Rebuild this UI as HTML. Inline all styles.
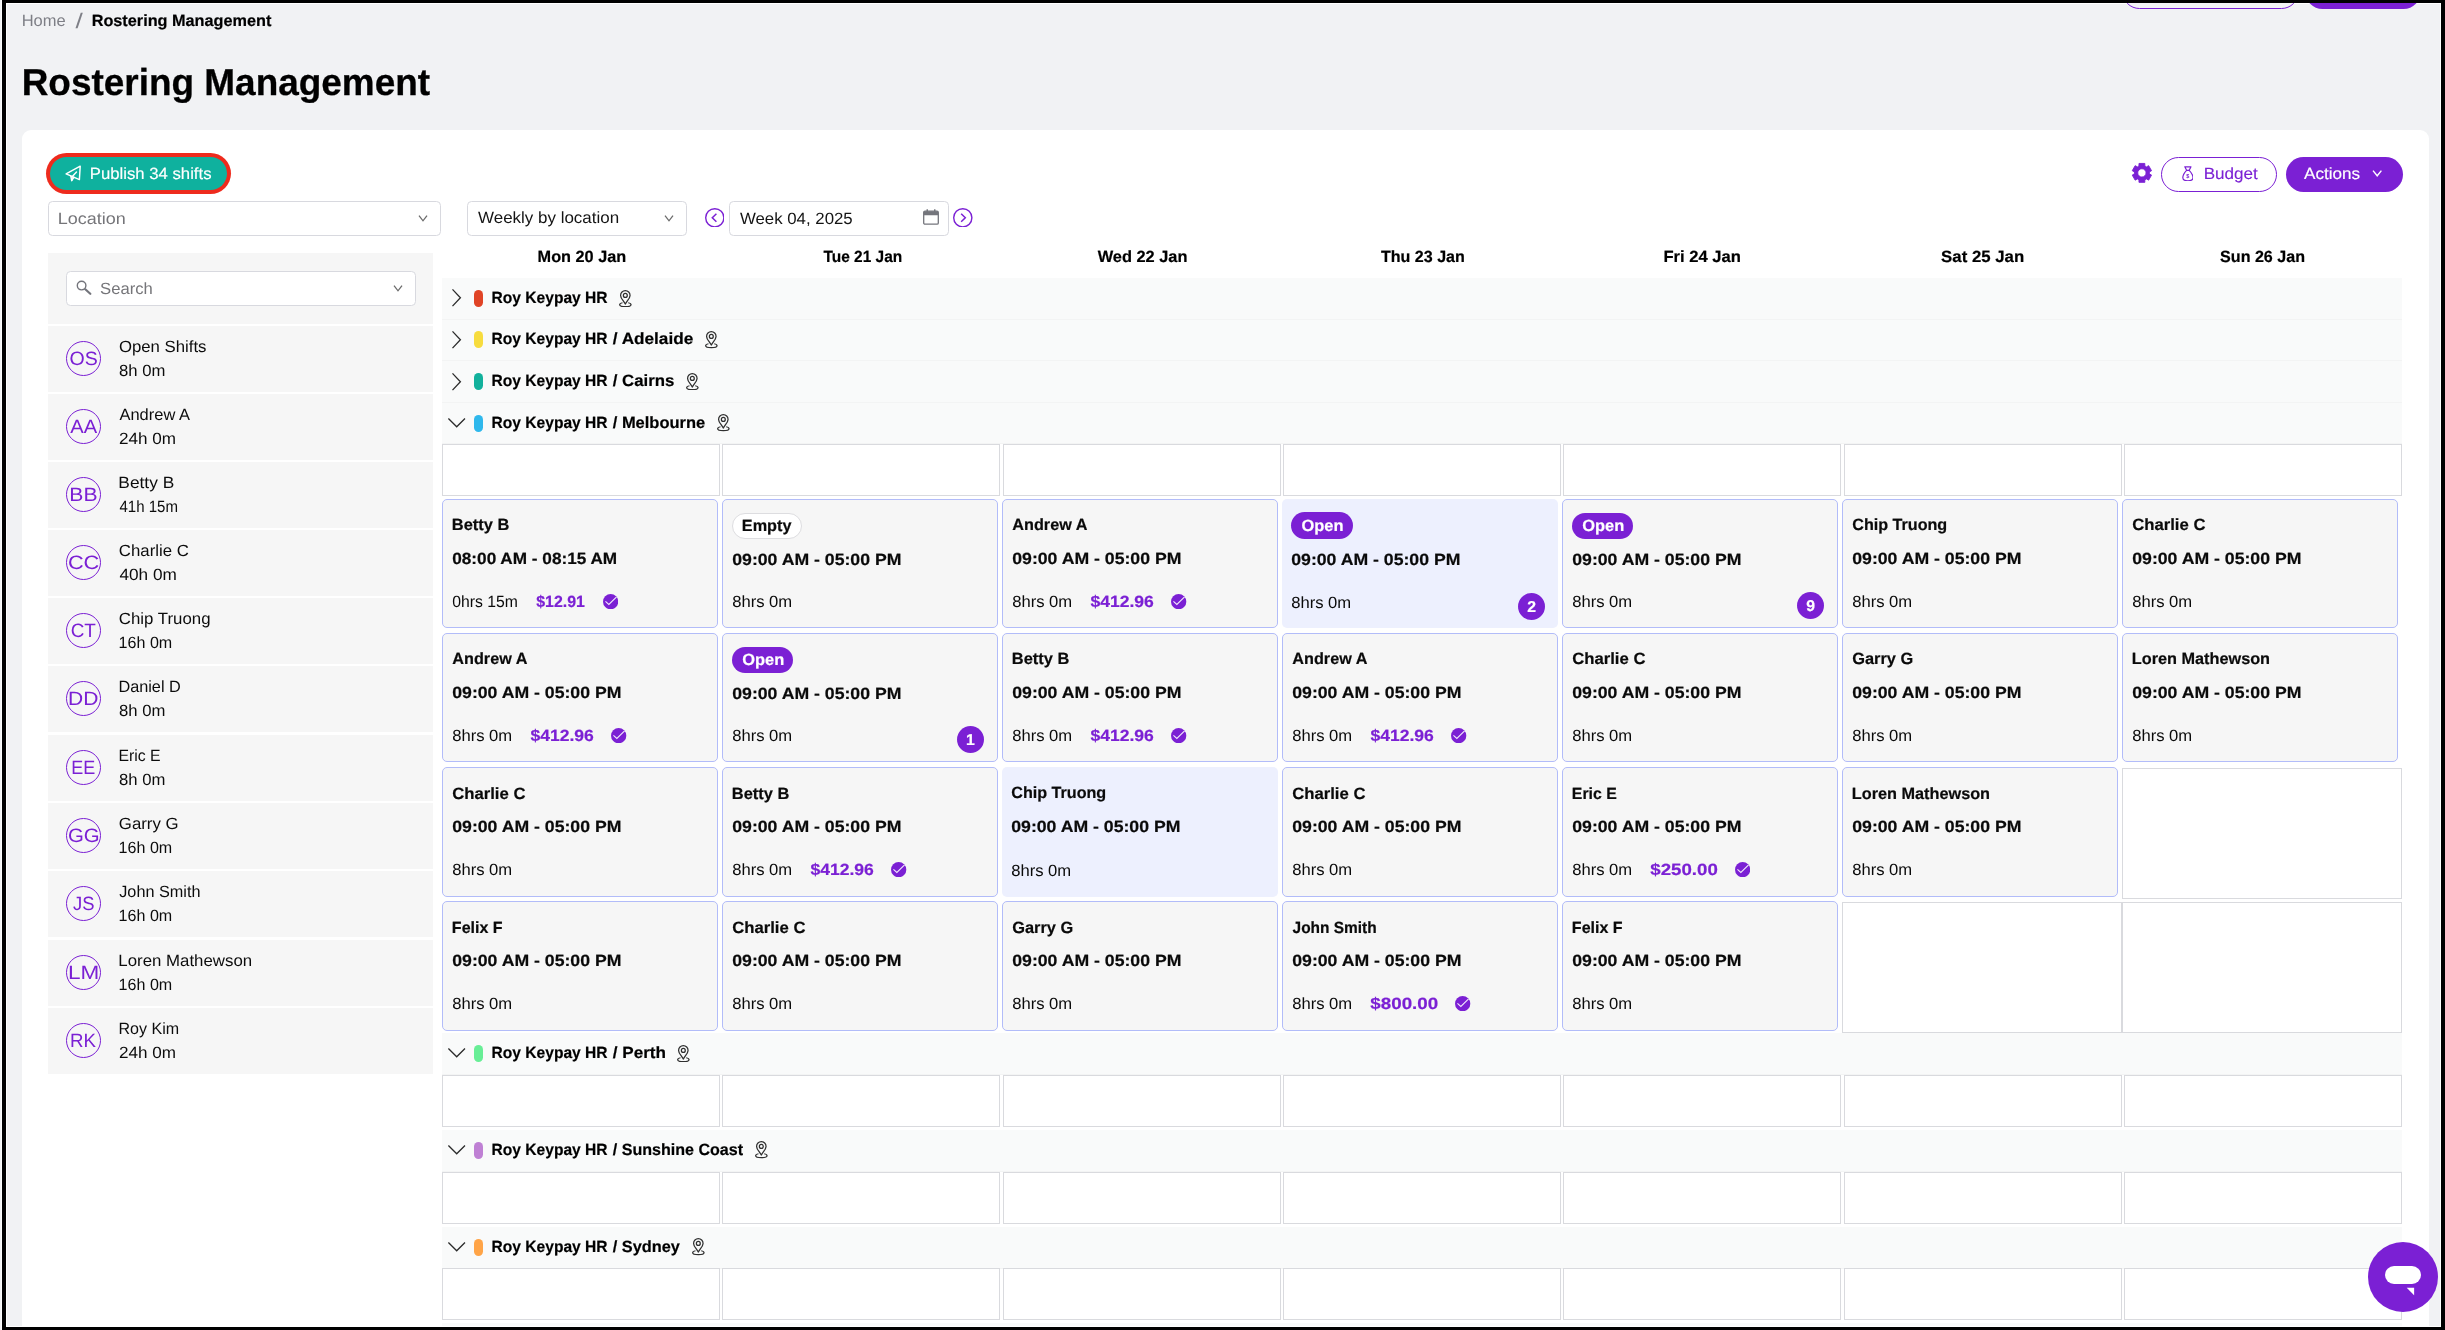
<!DOCTYPE html>
<html lang="en"><head><meta charset="utf-8"><title>Rostering Management</title>
<style>
html,body{margin:0;padding:0}
body{width:2445px;height:1330px;position:relative;background:#f1f2f4;font-family:"Liberation Sans", sans-serif;font-size:16px}
div,button,span,h1,h3,ul,li,nav,aside,section,main,article,header{margin:0;padding:0}
h3{font-size:inherit;font-weight:inherit}
ul{list-style:none}
#root{left:0;top:0;width:2445px;height:1330px;overflow:hidden;will-change:transform}
body div, body button, svg.i{position:absolute;display:block}
.t{position:absolute;white-space:pre;line-height:24px;margin:0;font-size:16.25px;font-weight:400;display:block;transform-origin:0 0;text-rendering:geometricPrecision}
.t.b,h1.t{font-weight:700;-webkit-text-stroke:0.2px currentColor}
h1.t{-webkit-text-stroke-width:0.3px}
button{font-family:inherit}
.sel{border:1.2px solid #d8d9df;border-radius:4.5px;box-sizing:border-box;background:#fff}
.cell{border:1.2px solid #d9dade;box-sizing:border-box;background:#fff}
.shift{background:#f6f6f6;border:1.2px solid #b2bcf9;border-radius:5px;box-sizing:border-box}
.shift.hl{background:#edf0fe;border:0}
.row{background:#f9fafa;border-bottom:1.5px solid #f3f4f4;box-sizing:border-box}
.pill{border-radius:4.5px}
.person{background:#f6f6f6}
.av{border:1.2px solid #7b20d4;border-radius:50%;box-sizing:border-box}
.badge{border-radius:13.5px;box-sizing:border-box}
.count{background:#7b20d4;border-radius:50%}
</style></head>
<body>
<div id="root">
<div class="frame">
<div style="left:1.00px;top:0.00px;width:1.00px;height:1330.00px;background:#fbfbfc"></div>
<div style="left:2.00px;top:0.00px;width:2443.00px;height:1330.00px;background:#000"></div>
<div style="left:6.00px;top:3.00px;width:2435.00px;height:1324.00px;background:#fff"></div>
<div style="left:7.00px;top:4.00px;width:2433.00px;height:1322.00px;background:#f1f2f4"></div>
</div>
<header class="top">
<button style="left:2121.50px;top:-26.50px;width:177.80px;height:35.30px;border:1.3px solid #7b20d4;border-radius:18px;box-sizing:border-box;background:#f3f3f6"></button>
<button style="left:2305.40px;top:-26.50px;width:116.00px;height:35.30px;border:0;border-radius:18px;background:#7b20d4"></button>
<div style="left:2.00px;top:0.00px;width:2443.00px;height:3.00px;background:#000"></div>
</header>
<nav class="crumbs">
<span class="t" style="left:21px;top:9px;color:#7e7f86;transform:matrix(1.0154,0,0,1,0.68,0);">Home</span>
<span class="t" style="left:75px;top:10px;font-size:21px;color:#7e7f86;transform:matrix(1.25,0,0,1,0.59,0);">/</span>
<span class="t b" style="left:91px;top:9px;transform:matrix(1.0003,0,0,1,0.64,0);">Rostering Management</span>
</nav>
<h1 class="t" style="left:21px;top:70px;font-size:37.5px;transform:matrix(0.9851,0,0,1,0.66,0);">Rostering Management</h1>
<main class="card">
<div style="left:22.00px;top:130.00px;width:2407.00px;height:1197.00px;background:#fff;border-radius:9px 9px 0 0"></div>
<div style="left:46.00px;top:153.00px;width:185.00px;height:41.00px;background:#ee2b1d;border-radius:21px"></div>
<button class="pub" style="left:50.00px;top:157.00px;width:177.00px;height:33.00px;background:#0fb19e;border-radius:17px;border:0"></button>
<svg class="i" style="left:65.20px;top:165.00px" width="16.80" height="16.60" viewBox="0 0 33.6 33.2" ><g fill="none" stroke="#fff" stroke-width="2.9" stroke-linejoin="round" stroke-linecap="round"><path d="M30.4 2.4 L2.2 17.8 L11.6 21.8 L28.8 29.2 Z"/><path d="M11.6 21.8 L13.4 31 L17.8 24.6"/><path d="M13.4 31 L14.6 23.2 L23 14.2"/></g></svg>
<span class="t" style="left:89px;top:162px;color:#fff;transform:matrix(1.0277,0,0,1,0.87,0);-webkit-text-stroke:0.15px #fff;">Publish 34 shifts</span>
<svg class="i" style="left:2131.00px;top:162.10px" width="21.80" height="21.80" viewBox="0 0 21.80 21.80" ><path d="M13.83 3.97 L13.83 1.44 L7.97 1.44 L7.97 3.97 L6.36 4.90 L4.17 3.64 L1.25 8.70 L3.43 9.97 L3.43 11.83 L1.25 13.10 L4.17 18.16 L6.36 16.90 L7.97 17.83 L7.97 20.36 L13.83 20.36 L13.83 17.83 L15.44 16.90 L17.63 18.16 L20.55 13.10 L18.37 11.83 L18.37 9.97 L20.55 8.70 L17.63 3.64 L15.44 4.90 Z M15.06 10.90 A4.16 4.16 0 1 0 6.74 10.90 A4.16 4.16 0 1 0 15.06 10.90 Z" fill="#7b20d4" fill-rule="evenodd" stroke="#7b20d4" stroke-width="0.9" stroke-linejoin="round"/></svg>
<button style="left:2160.60px;top:156.60px;width:116.30px;height:35.30px;border:1.2px solid #7b20d4;border-radius:18px;box-sizing:border-box;background:#fff"></button>
<svg class="i" style="left:2181.60px;top:165.60px" width="11.80" height="15.60" viewBox="0 0 23.6 31.2" ><g fill="none" stroke="#7b20d4" stroke-width="2.4" stroke-linejoin="round" stroke-linecap="round"><path d="M5.6 1.6 H18 L14.4 8.6 H9.2 Z"/><path d="M9.2 8.6 C5 13 1.6 18.6 1.6 23.4 C1.6 27.6 4.8 29.6 11.8 29.6 C18.8 29.6 22 27.6 22 23.4 C22 18.6 18.6 13 14.4 8.6"/></g><text x="11.8" y="25" font-family="Liberation Sans, sans-serif" font-weight="700" font-size="11" fill="#7b20d4" text-anchor="middle">$</text></svg>
<span class="t" style="left:2203px;top:162px;color:#7b20d4;transform:matrix(1.0532,0,0,1,0.63,0);-webkit-text-stroke:0.1px #7b20d4;">Budget</span>
<button style="left:2285.60px;top:156.60px;width:117.10px;height:35.30px;border:0;border-radius:18px;background:#7b20d4"></button>
<span class="t" style="left:2304px;top:162px;color:#fff;transform:matrix(1.052,0,0,1,0.08,0);-webkit-text-stroke:0.15px #fff;">Actions</span>
<svg class="i" style="left:2371.60px;top:169.30px" width="10.40" height="8.20" viewBox="-1 -1 10.4 8.2" ><path d="M0 0.6 L4.2 5.8 L8.4 0.6" fill="none" stroke="#fff" stroke-width="1.4"/></svg>
<div class="sel" style="left:48.00px;top:201.20px;width:393.00px;height:34.60px;"></div>
<span class="t" style="left:57px;top:207px;color:#757579;transform:matrix(1.106,0,0,1,0.86,0);">Location</span>
<svg class="i" style="left:418.20px;top:213.50px" width="10.00" height="8.20" viewBox="-1 -1 10 8.2" ><path d="M0 0.6 L4.0 5.8 L8 0.6" fill="none" stroke="#6b6b6b" stroke-width="1.3"/></svg>
<div class="sel" style="left:467.00px;top:201.20px;width:219.60px;height:34.60px;"></div>
<span class="t" style="left:478px;top:206px;color:#141414;transform:matrix(1.0439,0,0,1,0.02,0);">Weekly by location</span>
<svg class="i" style="left:664.00px;top:213.50px" width="10.00" height="8.20" viewBox="-1 -1 10 8.2" ><path d="M0 0.6 L4.0 5.8 L8 0.6" fill="none" stroke="#6b6b6b" stroke-width="1.3"/></svg>
<svg class="i" style="left:704.60px;top:207.50px" width="19.60" height="19.60" viewBox="0 0 19.6 19.6" ><circle cx="9.8" cy="9.8" r="9.10" fill="none" stroke="#7b20d4" stroke-width="1.4"/><path d="M11.42 5.82 L7.29 9.80 L11.42 13.78" fill="none" stroke="#7b20d4" stroke-width="1.5"/></svg>
<div class="sel" style="left:729.00px;top:201.20px;width:219.50px;height:34.60px;"></div>
<span class="t" style="left:739px;top:207px;color:#141414;transform:matrix(1.0344,0,0,1,0.93,0);">Week 04, 2025</span>
<svg class="i" style="left:922.80px;top:209.40px" width="16.00" height="16.00" viewBox="0 0 32 32" ><rect x="1.4" y="4.4" width="29.2" height="26" rx="2.6" fill="none" stroke="#74757c" stroke-width="2.6"/><path d="M1.4 7 Q1.4 4.4 4 4.4 H28 Q30.6 4.4 30.6 7 V12.4 H1.4 Z" fill="#74757c"/><rect x="7" y="0.6" width="3" height="5" fill="#74757c"/><rect x="22" y="0.6" width="3" height="5" fill="#74757c"/></svg>
<svg class="i" style="left:953.10px;top:207.50px" width="19.60" height="19.60" viewBox="0 0 19.6 19.6" ><circle cx="9.8" cy="9.8" r="9.10" fill="none" stroke="#7b20d4" stroke-width="1.4"/><path d="M8.18 5.82 L12.31 9.80 L8.18 13.78" fill="none" stroke="#7b20d4" stroke-width="1.5"/></svg>
<aside class="people">
<div class="person" style="left:48.00px;top:253.00px;width:385.00px;height:70.80px;"></div>
<div class="sel" style="left:66.20px;top:271.20px;width:349.60px;height:34.40px;"></div>
<svg class="i" style="left:75.60px;top:280.30px" width="16.20" height="15.20" viewBox="0 0 32.4 30.4" ><circle cx="11.2" cy="11.2" r="8.6" fill="none" stroke="#74757c" stroke-width="2.8"/><path d="M18.6 18.6 L28.6 27.6" stroke="#74757c" stroke-width="4.4" stroke-linecap="round"/></svg>
<span class="t" style="left:100px;top:277px;color:#757579;transform:matrix(1.0236,0,0,1,0.09,0);">Search</span>
<svg class="i" style="left:393.20px;top:284.10px" width="10.00" height="8.20" viewBox="-1 -1 10 8.2" ><path d="M0 0.6 L4.0 5.8 L8 0.6" fill="none" stroke="#6b6b6b" stroke-width="1.3"/></svg>
<ul>
<li>
<div class="person" style="left:48.00px;top:326.00px;width:385.00px;height:66.00px;"></div>
<div class="av" style="left:65.90px;top:341.30px;width:35.20px;height:35.20px;"></div>
<span class="t" style="left:69px;top:348px;font-size:19.25px;color:#7b20d4;transform:matrix(1.0144,0,0,1,0.47,0);">OS</span>
<span class="t" style="left:118px;top:335px;color:#0c0c0c;transform:matrix(1.0306,0,0,1,0.93,0);">Open Shifts</span>
<span class="t" style="left:119px;top:359px;color:#0c0c0c;transform:matrix(1.0264,0,0,1,0.07,0);">8h 0m</span>
</li>
<li>
<div class="person" style="left:48.00px;top:394.00px;width:385.00px;height:66.00px;"></div>
<div class="av" style="left:65.90px;top:409.30px;width:35.20px;height:35.20px;"></div>
<span class="t" style="left:70px;top:416px;font-size:19.25px;color:#7b20d4;transform:matrix(1.0462,0,0,1,0.21,0);">AA</span>
<span class="t" style="left:119px;top:403px;color:#0c0c0c;transform:matrix(1.013,0,0,1,0.49,0);">Andrew A</span>
<span class="t" style="left:118px;top:427px;color:#0c0c0c;transform:matrix(1.0514,0,0,1,1.0,0);">24h 0m</span>
</li>
<li>
<div class="person" style="left:48.00px;top:462.00px;width:385.00px;height:66.00px;"></div>
<div class="av" style="left:65.90px;top:477.30px;width:35.20px;height:35.20px;"></div>
<span class="t" style="left:69px;top:484px;font-size:19.25px;color:#7b20d4;transform:matrix(1.0972,0,0,1,0.29,0);">BB</span>
<span class="t" style="left:118px;top:471px;color:#0c0c0c;transform:matrix(1.0666,0,0,1,0.32,0);">Betty B</span>
<span class="t" style="left:119px;top:495px;color:#0c0c0c;transform:matrix(0.9246,0,0,1,0.47,0);">41h 15m</span>
</li>
<li>
<div class="person" style="left:48.00px;top:530.00px;width:385.00px;height:66.00px;"></div>
<div class="av" style="left:65.90px;top:545.30px;width:35.20px;height:35.20px;"></div>
<span class="t" style="left:67px;top:552px;font-size:19.25px;color:#7b20d4;transform:matrix(1.1319,0,0,1,0.88,0);">CC</span>
<span class="t" style="left:118px;top:539px;color:#0c0c0c;transform:matrix(1.0329,0,0,1,0.86,0);">Charlie C</span>
<span class="t" style="left:119px;top:563px;color:#0c0c0c;transform:matrix(1.0586,0,0,1,0.41,0);">40h 0m</span>
</li>
<li>
<div class="person" style="left:48.00px;top:598.00px;width:385.00px;height:66.00px;"></div>
<div class="av" style="left:65.90px;top:613.30px;width:35.20px;height:35.20px;"></div>
<span class="t" style="left:70px;top:620px;font-size:19.25px;color:#7b20d4;transform:matrix(0.9835,0,0,1,0.65,0);">CT</span>
<span class="t" style="left:118px;top:607px;color:#0c0c0c;transform:matrix(1.0356,0,0,1,0.86,0);">Chip Truong</span>
<span class="t" style="left:118px;top:631px;color:#0c0c0c;transform:matrix(0.9891,0,0,1,0.61,0);">16h 0m</span>
</li>
<li>
<div class="person" style="left:48.00px;top:666.00px;width:385.00px;height:66.00px;"></div>
<div class="av" style="left:65.90px;top:681.30px;width:35.20px;height:35.20px;"></div>
<span class="t" style="left:68px;top:688px;font-size:19.25px;color:#7b20d4;transform:matrix(1.0904,0,0,1,0.05,0);">DD</span>
<span class="t" style="left:118px;top:675px;color:#0c0c0c;transform:matrix(1.0015,0,0,1,0.4,0);">Daniel D</span>
<span class="t" style="left:119px;top:699px;color:#0c0c0c;transform:matrix(1.0264,0,0,1,0.07,0);">8h 0m</span>
</li>
<li>
<div class="person" style="left:48.00px;top:735.00px;width:385.00px;height:66.00px;"></div>
<div class="av" style="left:65.90px;top:750.30px;width:35.20px;height:35.20px;"></div>
<span class="t" style="left:71px;top:757px;font-size:19.25px;color:#7b20d4;transform:matrix(0.9343,0,0,1,0.3,0);">EE</span>
<span class="t" style="left:118px;top:744px;color:#0c0c0c;transform:matrix(0.9726,0,0,1,0.44,0);">Eric E</span>
<span class="t" style="left:119px;top:768px;color:#0c0c0c;transform:matrix(1.0264,0,0,1,0.07,0);">8h 0m</span>
</li>
<li>
<div class="person" style="left:48.00px;top:803.00px;width:385.00px;height:66.00px;"></div>
<div class="av" style="left:65.90px;top:818.30px;width:35.20px;height:35.20px;"></div>
<span class="t" style="left:67px;top:825px;font-size:19.25px;color:#7b20d4;transform:matrix(1.0588,0,0,1,0.97,0);">GG</span>
<span class="t" style="left:118px;top:812px;color:#0c0c0c;transform:matrix(1.033,0,0,1,0.87,0);">Garry G</span>
<span class="t" style="left:118px;top:836px;color:#0c0c0c;transform:matrix(0.9891,0,0,1,0.61,0);">16h 0m</span>
</li>
<li>
<div class="person" style="left:48.00px;top:871.00px;width:385.00px;height:66.00px;"></div>
<div class="av" style="left:65.90px;top:886.30px;width:35.20px;height:35.20px;"></div>
<span class="t" style="left:73px;top:893px;font-size:19.25px;color:#7b20d4;transform:matrix(0.9558,0,0,1,0.0,0);">JS</span>
<span class="t" style="left:119px;top:880px;color:#0c0c0c;transform:matrix(0.9989,0,0,1,0.25,0);">John Smith</span>
<span class="t" style="left:118px;top:904px;color:#0c0c0c;transform:matrix(0.9891,0,0,1,0.61,0);">16h 0m</span>
</li>
<li>
<div class="person" style="left:48.00px;top:940.00px;width:385.00px;height:66.00px;"></div>
<div class="av" style="left:65.90px;top:955.30px;width:35.20px;height:35.20px;"></div>
<span class="t" style="left:67px;top:962px;font-size:19.25px;color:#7b20d4;transform:matrix(1.1702,0,0,1,0.93,0);">LM</span>
<span class="t" style="left:118px;top:949px;color:#0c0c0c;transform:matrix(1.0355,0,0,1,0.36,0);">Loren Mathewson</span>
<span class="t" style="left:118px;top:973px;color:#0c0c0c;transform:matrix(0.9891,0,0,1,0.61,0);">16h 0m</span>
</li>
<li>
<div class="person" style="left:48.00px;top:1008.00px;width:385.00px;height:66.00px;"></div>
<div class="av" style="left:65.90px;top:1023.30px;width:35.20px;height:35.20px;"></div>
<span class="t" style="left:70px;top:1030px;font-size:19.25px;color:#7b20d4;transform:matrix(0.9704,0,0,1,0.12,0);">RK</span>
<span class="t" style="left:118px;top:1017px;color:#0c0c0c;transform:matrix(0.9877,0,0,1,0.42,0);">Roy Kim</span>
<span class="t" style="left:118px;top:1041px;color:#0c0c0c;transform:matrix(1.0514,0,0,1,1.0,0);">24h 0m</span>
</li>
</ul></aside>
<section class="grid">
<span class="t b" style="left:537px;top:245px;transform:matrix(1.001,0,0,1,0.59,0);">Mon 20 Jan</span>
<span class="t b" style="left:823px;top:245px;transform:matrix(0.9502,0,0,1,0.51,0);">Tue 21 Jan</span>
<span class="t b" style="left:1097px;top:245px;transform:matrix(1.0079,0,0,1,0.65,0);">Wed 22 Jan</span>
<span class="t b" style="left:1380px;top:245px;transform:matrix(0.9874,0,0,1,0.97,0);">Thu 23 Jan</span>
<span class="t b" style="left:1663px;top:245px;transform:matrix(1.0209,0,0,1,0.4,0);">Fri 24 Jan</span>
<span class="t b" style="left:1941px;top:245px;transform:matrix(1.0334,0,0,1,0.1,0);">Sat 25 Jan</span>
<span class="t b" style="left:2220px;top:245px;transform:matrix(0.9891,0,0,1,0.09,0);">Sun 26 Jan</span>
<div class="row" style="left:442.10px;top:278.10px;width:1959.60px;height:41.60px;"></div>
<svg class="i" style="left:451.00px;top:288.40px" width="11.00" height="19.50" viewBox="-1 -1 11.00 19.50" ><path d="M0.5 0.4 L8.40 8.75 L0.5 17.10" fill="none" stroke="#2b2b2b" stroke-width="1.3"/></svg>
<div class="pill" style="left:474.00px;top:289.70px;width:9.00px;height:17.20px;background:#e04426"></div>
<h3>
<span class="t b" style="left:491px;top:286px;transform:matrix(0.9579,0,0,1,0.59,0);">Roy Keypay HR</span>
</h3>
<svg class="i" style="left:619.30px;top:289.50px" width="12.80" height="17.50" viewBox="0 0 25.6 35" ><g fill="none" stroke="#2f2f2f" stroke-width="2.5" stroke-linejoin="round"><path d="M7 25.5 C3.5 26.2 1.3 27.8 1.3 29.7 C1.3 32 6.2 33.5 12.7 33.5 C19.2 33.5 24.1 32 24.1 29.7 C24.1 27.8 21.9 26.2 18.4 25.5"/><path d="M12.65 28.2 C9.6 21.8 3.15 16.6 3.15 10.75 A9.5 9.5 0 0 1 22.15 10.75 C22.15 16.6 15.7 21.8 12.65 28.2 Z"/><circle cx="12.65" cy="10.8" r="3.9"/></g></svg>
<div class="row" style="left:442.10px;top:319.70px;width:1959.60px;height:41.60px;"></div>
<svg class="i" style="left:451.00px;top:330.00px" width="11.00" height="19.50" viewBox="-1 -1 11.00 19.50" ><path d="M0.5 0.4 L8.40 8.75 L0.5 17.10" fill="none" stroke="#2b2b2b" stroke-width="1.3"/></svg>
<div class="pill" style="left:474.00px;top:331.30px;width:9.00px;height:17.20px;background:#f7dc3e"></div>
<h3>
<span class="t b" style="left:491px;top:327px;transform:matrix(0.9579,0,0,1,0.59,0);">Roy Keypay HR</span>
<span class="t b" style="left:612px;top:327px;transform:matrix(1.0572,0,0,1,0.73,0);">/ Adelaide</span>
</h3>
<svg class="i" style="left:704.90px;top:331.10px" width="12.80" height="17.50" viewBox="0 0 25.6 35" ><g fill="none" stroke="#2f2f2f" stroke-width="2.5" stroke-linejoin="round"><path d="M7 25.5 C3.5 26.2 1.3 27.8 1.3 29.7 C1.3 32 6.2 33.5 12.7 33.5 C19.2 33.5 24.1 32 24.1 29.7 C24.1 27.8 21.9 26.2 18.4 25.5"/><path d="M12.65 28.2 C9.6 21.8 3.15 16.6 3.15 10.75 A9.5 9.5 0 0 1 22.15 10.75 C22.15 16.6 15.7 21.8 12.65 28.2 Z"/><circle cx="12.65" cy="10.8" r="3.9"/></g></svg>
<div class="row" style="left:442.10px;top:361.30px;width:1959.60px;height:41.60px;"></div>
<svg class="i" style="left:451.00px;top:371.60px" width="11.00" height="19.50" viewBox="-1 -1 11.00 19.50" ><path d="M0.5 0.4 L8.40 8.75 L0.5 17.10" fill="none" stroke="#2b2b2b" stroke-width="1.3"/></svg>
<div class="pill" style="left:474.00px;top:372.90px;width:9.00px;height:17.20px;background:#12b19c"></div>
<h3>
<span class="t b" style="left:491px;top:369px;transform:matrix(0.9579,0,0,1,0.59,0);">Roy Keypay HR</span>
<span class="t b" style="left:612px;top:369px;transform:matrix(1.0324,0,0,1,0.74,0);">/ Cairns</span>
</h3>
<svg class="i" style="left:685.90px;top:372.70px" width="12.80" height="17.50" viewBox="0 0 25.6 35" ><g fill="none" stroke="#2f2f2f" stroke-width="2.5" stroke-linejoin="round"><path d="M7 25.5 C3.5 26.2 1.3 27.8 1.3 29.7 C1.3 32 6.2 33.5 12.7 33.5 C19.2 33.5 24.1 32 24.1 29.7 C24.1 27.8 21.9 26.2 18.4 25.5"/><path d="M12.65 28.2 C9.6 21.8 3.15 16.6 3.15 10.75 A9.5 9.5 0 0 1 22.15 10.75 C22.15 16.6 15.7 21.8 12.65 28.2 Z"/><circle cx="12.65" cy="10.8" r="3.9"/></g></svg>
<div class="row" style="left:442.10px;top:402.90px;width:1959.60px;height:41.60px;"></div>
<svg class="i" style="left:446.80px;top:416.50px" width="19.40" height="11.40" viewBox="-1 -1 19.40 11.40" ><path d="M0.4 0.5 L8.70 8.80 L17.00 0.5" fill="none" stroke="#2b2b2b" stroke-width="1.3"/></svg>
<div class="pill" style="left:474.00px;top:414.50px;width:9.00px;height:17.20px;background:#2fb8ec"></div>
<h3>
<span class="t b" style="left:491px;top:411px;transform:matrix(0.9579,0,0,1,0.59,0);">Roy Keypay HR</span>
<span class="t b" style="left:612px;top:411px;transform:matrix(1.0128,0,0,1,0.75,0);">/ Melbourne</span>
</h3>
<svg class="i" style="left:717.00px;top:414.30px" width="12.80" height="17.50" viewBox="0 0 25.6 35" ><g fill="none" stroke="#2f2f2f" stroke-width="2.5" stroke-linejoin="round"><path d="M7 25.5 C3.5 26.2 1.3 27.8 1.3 29.7 C1.3 32 6.2 33.5 12.7 33.5 C19.2 33.5 24.1 32 24.1 29.7 C24.1 27.8 21.9 26.2 18.4 25.5"/><path d="M12.65 28.2 C9.6 21.8 3.15 16.6 3.15 10.75 A9.5 9.5 0 0 1 22.15 10.75 C22.15 16.6 15.7 21.8 12.65 28.2 Z"/><circle cx="12.65" cy="10.8" r="3.9"/></g></svg>
<div class="cell" style="left:442.10px;top:444.10px;width:278.00px;height:51.60px;"></div>
<div class="cell" style="left:722.43px;top:444.10px;width:278.00px;height:51.60px;"></div>
<div class="cell" style="left:1002.76px;top:444.10px;width:278.00px;height:51.60px;"></div>
<div class="cell" style="left:1283.09px;top:444.10px;width:278.00px;height:51.60px;"></div>
<div class="cell" style="left:1563.42px;top:444.10px;width:278.00px;height:51.60px;"></div>
<div class="cell" style="left:1843.75px;top:444.10px;width:278.00px;height:51.60px;"></div>
<div class="cell" style="left:2124.08px;top:444.10px;width:278.00px;height:51.60px;"></div>
<article>
<div class="shift" style="left:442.10px;top:499.00px;width:276.00px;height:128.50px;"></div>
<span class="t b" style="left:451px;top:513px;color:#0a0a0a;transform:matrix(1.0104,0,0,1,0.83,0);">Betty B</span>
<span class="t b" style="left:452px;top:547px;color:#0a0a0a;transform:matrix(1.0575,0,0,1,0.25,0);">08:00 AM - 08:15 AM</span>
<span class="t" style="left:452px;top:590px;color:#0a0a0a;transform:matrix(0.9692,0,0,1,0.3,0);">0hrs 15m</span>
<span class="t b" style="left:536px;top:590px;color:#7b20d4;transform:matrix(0.9791,0,0,1,0.25,0);">$12.91</span>
<svg class="i" style="left:602.75px;top:593.70px" width="15.30" height="15.30" viewBox="0 0 30 30" ><circle cx="15" cy="15" r="15" fill="#7b20d4"/><path d="M4.8 14.4 L11.5 20.6 L26.6 5.8" fill="none" stroke="#f3e9fc" stroke-width="2.1"/></svg>
</article>
<article>
<div class="shift" style="left:722.10px;top:499.00px;width:276.00px;height:128.50px;"></div>
<div class="badge" style="left:732.00px;top:513.20px;width:70.00px;height:25.60px;background:#fff;border:1.2px solid #dddde0"></div>
<span class="t b" style="left:741px;top:514px;color:#0a0a0a;transform:matrix(0.9987,0,0,1,0.84,0);">Empty</span>
<span class="t b" style="left:732px;top:548px;color:#0a0a0a;transform:matrix(1.0869,0,0,1,0.23,0);">09:00 AM - 05:00 PM</span>
<span class="t" style="left:732px;top:590px;color:#0a0a0a;transform:matrix(1.0222,0,0,1,0.17,0);">8hrs 0m</span>
</article>
<article>
<div class="shift" style="left:1002.10px;top:499.00px;width:276.00px;height:128.50px;"></div>
<span class="t b" style="left:1012px;top:513px;color:#0a0a0a;transform:matrix(0.997,0,0,1,0.36,0);">Andrew A</span>
<span class="t b" style="left:1012px;top:547px;color:#0a0a0a;transform:matrix(1.0869,0,0,1,0.23,0);">09:00 AM - 05:00 PM</span>
<span class="t" style="left:1012px;top:590px;color:#0a0a0a;transform:matrix(1.0222,0,0,1,0.17,0);">8hrs 0m</span>
<span class="t b" style="left:1090px;top:590px;color:#7b20d4;transform:matrix(1.0791,0,0,1,0.4,0);">$412.96</span>
<svg class="i" style="left:1171.35px;top:593.70px" width="15.30" height="15.30" viewBox="0 0 30 30" ><circle cx="15" cy="15" r="15" fill="#7b20d4"/><path d="M4.8 14.4 L11.5 20.6 L26.6 5.8" fill="none" stroke="#f3e9fc" stroke-width="2.1"/></svg>
</article>
<article>
<div class="shift hl" style="left:1281.70px;top:498.80px;width:276.40px;height:128.90px;"></div>
<div class="badge" style="left:1291.20px;top:512.00px;width:62.00px;height:27.00px;background:#7b20d4"></div>
<span class="t b" style="left:1301px;top:514px;color:#fff;transform:matrix(1.0117,0,0,1,0.41,0);">Open</span>
<span class="t b" style="left:1291px;top:548px;color:#0a0a0a;transform:matrix(1.0869,0,0,1,0.23,0);">09:00 AM - 05:00 PM</span>
<span class="t" style="left:1291px;top:591px;color:#0a0a0a;transform:matrix(1.0222,0,0,1,0.17,0);">8hrs 0m</span>
<div class="count" style="left:1518.20px;top:592.90px;width:27.00px;height:27.00px;"></div>
<span class="t b" style="left:1527px;top:596px;font-size:15.75px;color:#fff;transform:matrix(1.0,0,0,1,0.36,0);">2</span>
</article>
<article>
<div class="shift" style="left:1562.10px;top:499.00px;width:276.00px;height:128.50px;"></div>
<div class="badge" style="left:1572.00px;top:513.00px;width:61.00px;height:26.00px;background:#7b20d4"></div>
<span class="t b" style="left:1582px;top:514px;color:#fff;transform:matrix(1.0117,0,0,1,0.21,0);">Open</span>
<span class="t b" style="left:1572px;top:548px;color:#0a0a0a;transform:matrix(1.0869,0,0,1,0.23,0);">09:00 AM - 05:00 PM</span>
<span class="t" style="left:1572px;top:590px;color:#0a0a0a;transform:matrix(1.0222,0,0,1,0.17,0);">8hrs 0m</span>
<div class="count" style="left:1797.20px;top:591.90px;width:27.00px;height:27.00px;"></div>
<span class="t b" style="left:1806px;top:595px;font-size:15.75px;color:#fff;transform:matrix(1.0,0,0,1,0.33,0);">9</span>
</article>
<article>
<div class="shift" style="left:1842.10px;top:499.00px;width:276.00px;height:128.50px;"></div>
<span class="t b" style="left:1852px;top:513px;color:#0a0a0a;transform:matrix(0.9929,0,0,1,0.23,0);">Chip Truong</span>
<span class="t b" style="left:1852px;top:547px;color:#0a0a0a;transform:matrix(1.0869,0,0,1,0.23,0);">09:00 AM - 05:00 PM</span>
<span class="t" style="left:1852px;top:590px;color:#0a0a0a;transform:matrix(1.0222,0,0,1,0.17,0);">8hrs 0m</span>
</article>
<article>
<div class="shift" style="left:2122.10px;top:499.00px;width:276.00px;height:128.50px;"></div>
<span class="t b" style="left:2132px;top:513px;color:#0a0a0a;transform:matrix(1.0269,0,0,1,0.2,0);">Charlie C</span>
<span class="t b" style="left:2132px;top:547px;color:#0a0a0a;transform:matrix(1.0869,0,0,1,0.23,0);">09:00 AM - 05:00 PM</span>
<span class="t" style="left:2132px;top:590px;color:#0a0a0a;transform:matrix(1.0222,0,0,1,0.17,0);">8hrs 0m</span>
</article>
<article>
<div class="shift" style="left:442.10px;top:633.40px;width:276.00px;height:129.00px;"></div>
<span class="t b" style="left:452px;top:647px;color:#0a0a0a;transform:matrix(0.997,0,0,1,0.36,0);">Andrew A</span>
<span class="t b" style="left:452px;top:681px;color:#0a0a0a;transform:matrix(1.0869,0,0,1,0.23,0);">09:00 AM - 05:00 PM</span>
<span class="t" style="left:452px;top:724px;color:#0a0a0a;transform:matrix(1.0222,0,0,1,0.17,0);">8hrs 0m</span>
<span class="t b" style="left:530px;top:724px;color:#7b20d4;transform:matrix(1.0791,0,0,1,0.4,0);">$412.96</span>
<svg class="i" style="left:611.35px;top:727.70px" width="15.30" height="15.30" viewBox="0 0 30 30" ><circle cx="15" cy="15" r="15" fill="#7b20d4"/><path d="M4.8 14.4 L11.5 20.6 L26.6 5.8" fill="none" stroke="#f3e9fc" stroke-width="2.1"/></svg>
</article>
<article>
<div class="shift" style="left:722.10px;top:633.40px;width:276.00px;height:129.00px;"></div>
<div class="badge" style="left:732.00px;top:647.40px;width:61.00px;height:26.00px;background:#7b20d4"></div>
<span class="t b" style="left:742px;top:648px;color:#fff;transform:matrix(1.0117,0,0,1,0.21,0);">Open</span>
<span class="t b" style="left:732px;top:682px;color:#0a0a0a;transform:matrix(1.0869,0,0,1,0.23,0);">09:00 AM - 05:00 PM</span>
<span class="t" style="left:732px;top:724px;color:#0a0a0a;transform:matrix(1.0222,0,0,1,0.17,0);">8hrs 0m</span>
<div class="count" style="left:957.20px;top:726.30px;width:27.00px;height:27.00px;"></div>
<span class="t b" style="left:966px;top:729px;font-size:15.75px;color:#fff;transform:matrix(1.0,0,0,1,0.04,0);">1</span>
</article>
<article>
<div class="shift" style="left:1002.10px;top:633.40px;width:276.00px;height:129.00px;"></div>
<span class="t b" style="left:1011px;top:647px;color:#0a0a0a;transform:matrix(1.0104,0,0,1,0.83,0);">Betty B</span>
<span class="t b" style="left:1012px;top:681px;color:#0a0a0a;transform:matrix(1.0869,0,0,1,0.23,0);">09:00 AM - 05:00 PM</span>
<span class="t" style="left:1012px;top:724px;color:#0a0a0a;transform:matrix(1.0222,0,0,1,0.17,0);">8hrs 0m</span>
<span class="t b" style="left:1090px;top:724px;color:#7b20d4;transform:matrix(1.0791,0,0,1,0.4,0);">$412.96</span>
<svg class="i" style="left:1171.35px;top:727.70px" width="15.30" height="15.30" viewBox="0 0 30 30" ><circle cx="15" cy="15" r="15" fill="#7b20d4"/><path d="M4.8 14.4 L11.5 20.6 L26.6 5.8" fill="none" stroke="#f3e9fc" stroke-width="2.1"/></svg>
</article>
<article>
<div class="shift" style="left:1282.10px;top:633.40px;width:276.00px;height:129.00px;"></div>
<span class="t b" style="left:1292px;top:647px;color:#0a0a0a;transform:matrix(0.997,0,0,1,0.36,0);">Andrew A</span>
<span class="t b" style="left:1292px;top:681px;color:#0a0a0a;transform:matrix(1.0869,0,0,1,0.23,0);">09:00 AM - 05:00 PM</span>
<span class="t" style="left:1292px;top:724px;color:#0a0a0a;transform:matrix(1.0222,0,0,1,0.17,0);">8hrs 0m</span>
<span class="t b" style="left:1370px;top:724px;color:#7b20d4;transform:matrix(1.0791,0,0,1,0.4,0);">$412.96</span>
<svg class="i" style="left:1451.35px;top:727.70px" width="15.30" height="15.30" viewBox="0 0 30 30" ><circle cx="15" cy="15" r="15" fill="#7b20d4"/><path d="M4.8 14.4 L11.5 20.6 L26.6 5.8" fill="none" stroke="#f3e9fc" stroke-width="2.1"/></svg>
</article>
<article>
<div class="shift" style="left:1562.10px;top:633.40px;width:276.00px;height:129.00px;"></div>
<span class="t b" style="left:1572px;top:647px;color:#0a0a0a;transform:matrix(1.0269,0,0,1,0.2,0);">Charlie C</span>
<span class="t b" style="left:1572px;top:681px;color:#0a0a0a;transform:matrix(1.0869,0,0,1,0.23,0);">09:00 AM - 05:00 PM</span>
<span class="t" style="left:1572px;top:724px;color:#0a0a0a;transform:matrix(1.0222,0,0,1,0.17,0);">8hrs 0m</span>
</article>
<article>
<div class="shift" style="left:1842.10px;top:633.40px;width:276.00px;height:129.00px;"></div>
<span class="t b" style="left:1852px;top:647px;color:#0a0a0a;transform:matrix(1.0088,0,0,1,0.21,0);">Garry G</span>
<span class="t b" style="left:1852px;top:681px;color:#0a0a0a;transform:matrix(1.0869,0,0,1,0.23,0);">09:00 AM - 05:00 PM</span>
<span class="t" style="left:1852px;top:724px;color:#0a0a0a;transform:matrix(1.0222,0,0,1,0.17,0);">8hrs 0m</span>
</article>
<article>
<div class="shift" style="left:2122.10px;top:633.40px;width:276.00px;height:129.00px;"></div>
<span class="t b" style="left:2131px;top:647px;color:#0a0a0a;transform:matrix(1.0006,0,0,1,0.84,0);">Loren Mathewson</span>
<span class="t b" style="left:2132px;top:681px;color:#0a0a0a;transform:matrix(1.0869,0,0,1,0.23,0);">09:00 AM - 05:00 PM</span>
<span class="t" style="left:2132px;top:724px;color:#0a0a0a;transform:matrix(1.0222,0,0,1,0.17,0);">8hrs 0m</span>
</article>
<article>
<div class="shift" style="left:442.10px;top:767.00px;width:276.00px;height:129.60px;"></div>
<span class="t b" style="left:452px;top:782px;color:#0a0a0a;transform:matrix(1.0269,0,0,1,0.2,0);">Charlie C</span>
<span class="t b" style="left:452px;top:815px;color:#0a0a0a;transform:matrix(1.0869,0,0,1,0.23,0);">09:00 AM - 05:00 PM</span>
<span class="t" style="left:452px;top:858px;color:#0a0a0a;transform:matrix(1.0222,0,0,1,0.17,0);">8hrs 0m</span>
</article>
<article>
<div class="shift" style="left:722.10px;top:767.00px;width:276.00px;height:129.60px;"></div>
<span class="t b" style="left:731px;top:782px;color:#0a0a0a;transform:matrix(1.0104,0,0,1,0.83,0);">Betty B</span>
<span class="t b" style="left:732px;top:815px;color:#0a0a0a;transform:matrix(1.0869,0,0,1,0.23,0);">09:00 AM - 05:00 PM</span>
<span class="t" style="left:732px;top:858px;color:#0a0a0a;transform:matrix(1.0222,0,0,1,0.17,0);">8hrs 0m</span>
<span class="t b" style="left:810px;top:858px;color:#7b20d4;transform:matrix(1.0791,0,0,1,0.4,0);">$412.96</span>
<svg class="i" style="left:891.35px;top:861.70px" width="15.30" height="15.30" viewBox="0 0 30 30" ><circle cx="15" cy="15" r="15" fill="#7b20d4"/><path d="M4.8 14.4 L11.5 20.6 L26.6 5.8" fill="none" stroke="#f3e9fc" stroke-width="2.1"/></svg>
</article>
<article>
<div class="shift hl" style="left:1001.70px;top:766.80px;width:276.40px;height:130.00px;"></div>
<span class="t b" style="left:1011px;top:781px;color:#0a0a0a;transform:matrix(0.9929,0,0,1,0.23,0);">Chip Truong</span>
<span class="t b" style="left:1011px;top:815px;color:#0a0a0a;transform:matrix(1.0869,0,0,1,0.23,0);">09:00 AM - 05:00 PM</span>
<span class="t" style="left:1011px;top:859px;color:#0a0a0a;transform:matrix(1.0222,0,0,1,0.17,0);">8hrs 0m</span>
</article>
<article>
<div class="shift" style="left:1282.10px;top:767.00px;width:276.00px;height:129.60px;"></div>
<span class="t b" style="left:1292px;top:782px;color:#0a0a0a;transform:matrix(1.0269,0,0,1,0.2,0);">Charlie C</span>
<span class="t b" style="left:1292px;top:815px;color:#0a0a0a;transform:matrix(1.0869,0,0,1,0.23,0);">09:00 AM - 05:00 PM</span>
<span class="t" style="left:1292px;top:858px;color:#0a0a0a;transform:matrix(1.0222,0,0,1,0.17,0);">8hrs 0m</span>
</article>
<article>
<div class="shift" style="left:1562.10px;top:767.00px;width:276.00px;height:129.60px;"></div>
<span class="t b" style="left:1571px;top:782px;color:#0a0a0a;transform:matrix(0.9732,0,0,1,0.87,0);">Eric E</span>
<span class="t b" style="left:1572px;top:815px;color:#0a0a0a;transform:matrix(1.0869,0,0,1,0.23,0);">09:00 AM - 05:00 PM</span>
<span class="t" style="left:1572px;top:858px;color:#0a0a0a;transform:matrix(1.0222,0,0,1,0.17,0);">8hrs 0m</span>
<span class="t b" style="left:1650px;top:858px;color:#7b20d4;transform:matrix(1.1479,0,0,1,0.37,0);">$250.00</span>
<svg class="i" style="left:1735.15px;top:861.70px" width="15.30" height="15.30" viewBox="0 0 30 30" ><circle cx="15" cy="15" r="15" fill="#7b20d4"/><path d="M4.8 14.4 L11.5 20.6 L26.6 5.8" fill="none" stroke="#f3e9fc" stroke-width="2.1"/></svg>
</article>
<article>
<div class="shift" style="left:1842.10px;top:767.00px;width:276.00px;height:129.60px;"></div>
<span class="t b" style="left:1851px;top:782px;color:#0a0a0a;transform:matrix(1.0006,0,0,1,0.84,0);">Loren Mathewson</span>
<span class="t b" style="left:1852px;top:815px;color:#0a0a0a;transform:matrix(1.0869,0,0,1,0.23,0);">09:00 AM - 05:00 PM</span>
<span class="t" style="left:1852px;top:858px;color:#0a0a0a;transform:matrix(1.0222,0,0,1,0.17,0);">8hrs 0m</span>
</article>
<div class="cell" style="left:2122.20px;top:767.50px;width:279.90px;height:131.00px;"></div>
<article>
<div class="shift" style="left:442.10px;top:901.40px;width:276.00px;height:129.30px;"></div>
<span class="t b" style="left:451px;top:916px;color:#0a0a0a;transform:matrix(0.9839,0,0,1,0.86,0);">Felix F</span>
<span class="t b" style="left:452px;top:949px;color:#0a0a0a;transform:matrix(1.0869,0,0,1,0.23,0);">09:00 AM - 05:00 PM</span>
<span class="t" style="left:452px;top:992px;color:#0a0a0a;transform:matrix(1.0222,0,0,1,0.17,0);">8hrs 0m</span>
</article>
<article>
<div class="shift" style="left:722.10px;top:901.40px;width:276.00px;height:129.30px;"></div>
<span class="t b" style="left:732px;top:916px;color:#0a0a0a;transform:matrix(1.0269,0,0,1,0.2,0);">Charlie C</span>
<span class="t b" style="left:732px;top:949px;color:#0a0a0a;transform:matrix(1.0869,0,0,1,0.23,0);">09:00 AM - 05:00 PM</span>
<span class="t" style="left:732px;top:992px;color:#0a0a0a;transform:matrix(1.0222,0,0,1,0.17,0);">8hrs 0m</span>
</article>
<article>
<div class="shift" style="left:1002.10px;top:901.40px;width:276.00px;height:129.30px;"></div>
<span class="t b" style="left:1012px;top:916px;color:#0a0a0a;transform:matrix(1.0088,0,0,1,0.21,0);">Garry G</span>
<span class="t b" style="left:1012px;top:949px;color:#0a0a0a;transform:matrix(1.0869,0,0,1,0.23,0);">09:00 AM - 05:00 PM</span>
<span class="t" style="left:1012px;top:992px;color:#0a0a0a;transform:matrix(1.0222,0,0,1,0.17,0);">8hrs 0m</span>
</article>
<article>
<div class="shift" style="left:1282.10px;top:901.40px;width:276.00px;height:129.30px;"></div>
<span class="t b" style="left:1292px;top:916px;color:#0a0a0a;transform:matrix(0.9501,0,0,1,0.55,0);">John Smith</span>
<span class="t b" style="left:1292px;top:949px;color:#0a0a0a;transform:matrix(1.0869,0,0,1,0.23,0);">09:00 AM - 05:00 PM</span>
<span class="t" style="left:1292px;top:992px;color:#0a0a0a;transform:matrix(1.0222,0,0,1,0.17,0);">8hrs 0m</span>
<span class="t b" style="left:1370px;top:992px;color:#7b20d4;transform:matrix(1.1532,0,0,1,0.37,0);">$800.00</span>
<svg class="i" style="left:1455.45px;top:995.70px" width="15.30" height="15.30" viewBox="0 0 30 30" ><circle cx="15" cy="15" r="15" fill="#7b20d4"/><path d="M4.8 14.4 L11.5 20.6 L26.6 5.8" fill="none" stroke="#f3e9fc" stroke-width="2.1"/></svg>
</article>
<article>
<div class="shift" style="left:1562.10px;top:901.40px;width:276.00px;height:129.30px;"></div>
<span class="t b" style="left:1571px;top:916px;color:#0a0a0a;transform:matrix(0.9839,0,0,1,0.86,0);">Felix F</span>
<span class="t b" style="left:1572px;top:949px;color:#0a0a0a;transform:matrix(1.0869,0,0,1,0.23,0);">09:00 AM - 05:00 PM</span>
<span class="t" style="left:1572px;top:992px;color:#0a0a0a;transform:matrix(1.0222,0,0,1,0.17,0);">8hrs 0m</span>
</article>
<div class="cell" style="left:1842.20px;top:901.90px;width:279.90px;height:131.00px;"></div>
<div class="cell" style="left:2122.20px;top:901.90px;width:279.90px;height:131.00px;"></div>
<div class="row" style="left:442.10px;top:1033.10px;width:1959.60px;height:41.60px;"></div>
<svg class="i" style="left:446.80px;top:1046.70px" width="19.40" height="11.40" viewBox="-1 -1 19.40 11.40" ><path d="M0.4 0.5 L8.70 8.80 L17.00 0.5" fill="none" stroke="#2b2b2b" stroke-width="1.3"/></svg>
<div class="pill" style="left:474.00px;top:1044.70px;width:9.00px;height:17.20px;background:#68ee96"></div>
<h3>
<span class="t b" style="left:491px;top:1041px;transform:matrix(0.9579,0,0,1,0.59,0);">Roy Keypay HR</span>
<span class="t b" style="left:612px;top:1041px;transform:matrix(1.0515,0,0,1,0.74,0);">/ Perth</span>
</h3>
<svg class="i" style="left:677.40px;top:1044.50px" width="12.80" height="17.50" viewBox="0 0 25.6 35" ><g fill="none" stroke="#2f2f2f" stroke-width="2.5" stroke-linejoin="round"><path d="M7 25.5 C3.5 26.2 1.3 27.8 1.3 29.7 C1.3 32 6.2 33.5 12.7 33.5 C19.2 33.5 24.1 32 24.1 29.7 C24.1 27.8 21.9 26.2 18.4 25.5"/><path d="M12.65 28.2 C9.6 21.8 3.15 16.6 3.15 10.75 A9.5 9.5 0 0 1 22.15 10.75 C22.15 16.6 15.7 21.8 12.65 28.2 Z"/><circle cx="12.65" cy="10.8" r="3.9"/></g></svg>
<div class="cell" style="left:442.10px;top:1075.00px;width:278.00px;height:52.40px;"></div>
<div class="cell" style="left:722.43px;top:1075.00px;width:278.00px;height:52.40px;"></div>
<div class="cell" style="left:1002.76px;top:1075.00px;width:278.00px;height:52.40px;"></div>
<div class="cell" style="left:1283.09px;top:1075.00px;width:278.00px;height:52.40px;"></div>
<div class="cell" style="left:1563.42px;top:1075.00px;width:278.00px;height:52.40px;"></div>
<div class="cell" style="left:1843.75px;top:1075.00px;width:278.00px;height:52.40px;"></div>
<div class="cell" style="left:2124.08px;top:1075.00px;width:278.00px;height:52.40px;"></div>
<div class="row" style="left:442.10px;top:1130.00px;width:1959.60px;height:41.60px;"></div>
<svg class="i" style="left:446.80px;top:1143.60px" width="19.40" height="11.40" viewBox="-1 -1 19.40 11.40" ><path d="M0.4 0.5 L8.70 8.80 L17.00 0.5" fill="none" stroke="#2b2b2b" stroke-width="1.3"/></svg>
<div class="pill" style="left:474.00px;top:1141.60px;width:9.00px;height:17.20px;background:#bf80d4"></div>
<h3>
<span class="t b" style="left:491px;top:1138px;transform:matrix(0.9579,0,0,1,0.59,0);">Roy Keypay HR</span>
<span class="t b" style="left:612px;top:1138px;transform:matrix(0.9878,0,0,1,0.76,0);">/ Sunshine Coast</span>
</h3>
<svg class="i" style="left:755.30px;top:1141.40px" width="12.80" height="17.50" viewBox="0 0 25.6 35" ><g fill="none" stroke="#2f2f2f" stroke-width="2.5" stroke-linejoin="round"><path d="M7 25.5 C3.5 26.2 1.3 27.8 1.3 29.7 C1.3 32 6.2 33.5 12.7 33.5 C19.2 33.5 24.1 32 24.1 29.7 C24.1 27.8 21.9 26.2 18.4 25.5"/><path d="M12.65 28.2 C9.6 21.8 3.15 16.6 3.15 10.75 A9.5 9.5 0 0 1 22.15 10.75 C22.15 16.6 15.7 21.8 12.65 28.2 Z"/><circle cx="12.65" cy="10.8" r="3.9"/></g></svg>
<div class="cell" style="left:442.10px;top:1172.00px;width:278.00px;height:51.60px;"></div>
<div class="cell" style="left:722.43px;top:1172.00px;width:278.00px;height:51.60px;"></div>
<div class="cell" style="left:1002.76px;top:1172.00px;width:278.00px;height:51.60px;"></div>
<div class="cell" style="left:1283.09px;top:1172.00px;width:278.00px;height:51.60px;"></div>
<div class="cell" style="left:1563.42px;top:1172.00px;width:278.00px;height:51.60px;"></div>
<div class="cell" style="left:1843.75px;top:1172.00px;width:278.00px;height:51.60px;"></div>
<div class="cell" style="left:2124.08px;top:1172.00px;width:278.00px;height:51.60px;"></div>
<div class="row" style="left:442.10px;top:1227.00px;width:1959.60px;height:41.60px;"></div>
<svg class="i" style="left:446.80px;top:1240.60px" width="19.40" height="11.40" viewBox="-1 -1 19.40 11.40" ><path d="M0.4 0.5 L8.70 8.80 L17.00 0.5" fill="none" stroke="#2b2b2b" stroke-width="1.3"/></svg>
<div class="pill" style="left:474.00px;top:1238.60px;width:9.00px;height:17.20px;background:#ffa447"></div>
<h3>
<span class="t b" style="left:491px;top:1235px;transform:matrix(0.9579,0,0,1,0.59,0);">Roy Keypay HR</span>
<span class="t b" style="left:612px;top:1235px;transform:matrix(1.0042,0,0,1,0.75,0);">/ Sydney</span>
</h3>
<svg class="i" style="left:691.80px;top:1238.40px" width="12.80" height="17.50" viewBox="0 0 25.6 35" ><g fill="none" stroke="#2f2f2f" stroke-width="2.5" stroke-linejoin="round"><path d="M7 25.5 C3.5 26.2 1.3 27.8 1.3 29.7 C1.3 32 6.2 33.5 12.7 33.5 C19.2 33.5 24.1 32 24.1 29.7 C24.1 27.8 21.9 26.2 18.4 25.5"/><path d="M12.65 28.2 C9.6 21.8 3.15 16.6 3.15 10.75 A9.5 9.5 0 0 1 22.15 10.75 C22.15 16.6 15.7 21.8 12.65 28.2 Z"/><circle cx="12.65" cy="10.8" r="3.9"/></g></svg>
<div class="cell" style="left:442.10px;top:1268.00px;width:278.00px;height:52.40px;"></div>
<div class="cell" style="left:722.43px;top:1268.00px;width:278.00px;height:52.40px;"></div>
<div class="cell" style="left:1002.76px;top:1268.00px;width:278.00px;height:52.40px;"></div>
<div class="cell" style="left:1283.09px;top:1268.00px;width:278.00px;height:52.40px;"></div>
<div class="cell" style="left:1563.42px;top:1268.00px;width:278.00px;height:52.40px;"></div>
<div class="cell" style="left:1843.75px;top:1268.00px;width:278.00px;height:52.40px;"></div>
<div class="cell" style="left:2124.08px;top:1268.00px;width:278.00px;height:52.40px;"></div>
<div class="row" style="left:442.10px;top:1322.80px;width:1959.60px;height:10.00px;"></div>
</section></main>
<div class="chat">
<div style="left:2368.00px;top:1242.00px;width:70.00px;height:70.00px;background:#7b20d4;border-radius:50%"></div>
<div style="left:2384.80px;top:1265.60px;width:36.40px;height:18.80px;background:#fff;border-radius:9.4px"></div>
<svg class="i" style="left:2406.00px;top:1287.00px" width="9.00" height="9.00" viewBox="0 0 9 9" ><path d="M0.7 0.8 H8.1 V8.3 Z" fill="#fff"/></svg>
</div>
<div class="frame-top">
<div style="left:2.00px;top:1327.00px;width:2443.00px;height:3.00px;background:#000"></div>
<div style="left:2441.00px;top:0.00px;width:4.00px;height:1330.00px;background:#000"></div>
<div style="left:2440.00px;top:3.00px;width:1.00px;height:1324.00px;background:#fff"></div>
<div style="left:7.00px;top:1326.00px;width:2434.00px;height:1.00px;background:#fff"></div>
</div>
</div>
</body></html>
